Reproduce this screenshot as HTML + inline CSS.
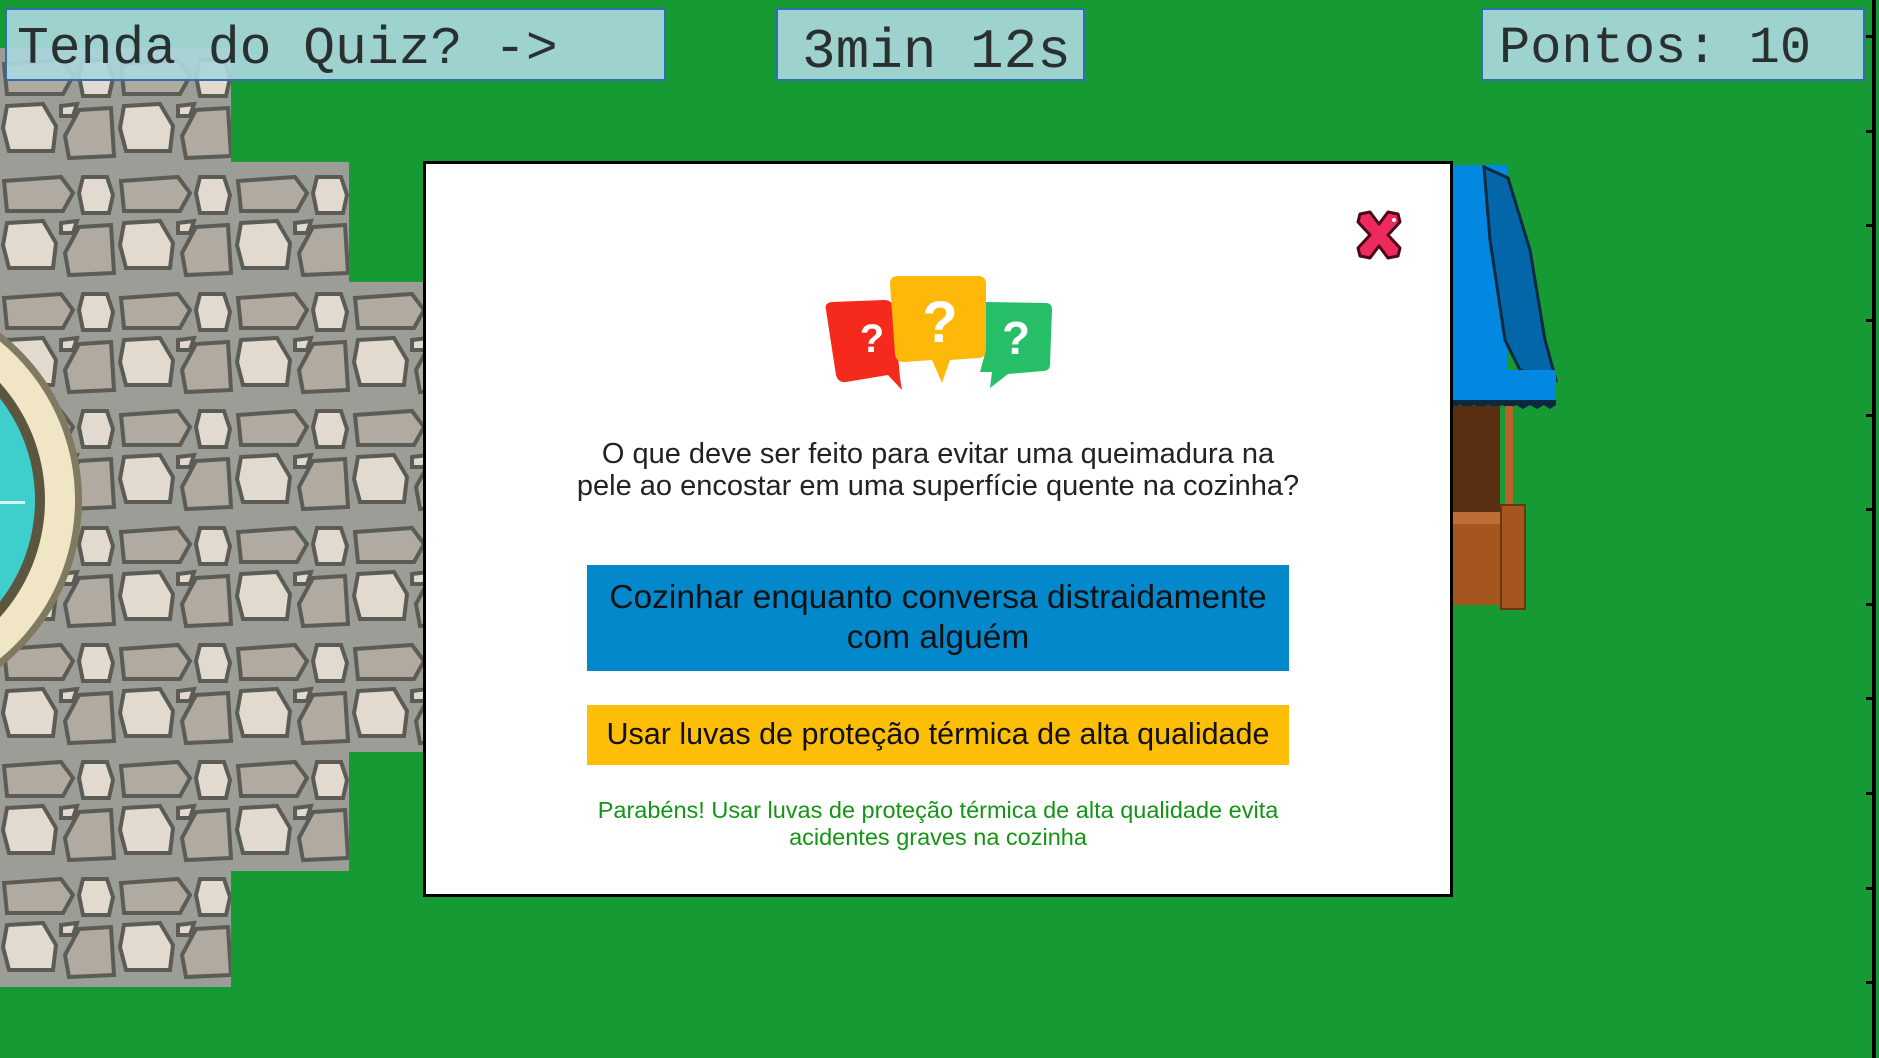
<!DOCTYPE html>
<html><head><meta charset="utf-8">
<style>
html,body{margin:0;padding:0;width:1879px;height:1058px;overflow:hidden;background:#169a34;font-family:"Liberation Sans",Arial,sans-serif}
.abs{position:absolute}
.hud{position:absolute;background:rgba(170,215,220,0.92);border:2px solid #2f6fb0;box-sizing:border-box;font-family:"Liberation Mono",monospace;color:#2a3030;white-space:nowrap;line-height:78px;font-weight:normal}
.c{position:absolute;left:0;width:100%;text-align:center;white-space:nowrap}
</style></head><body>
<svg class="abs" style="left:0;top:0" width="1879" height="1058">
<defs>
<pattern id="st" x="1" y="56" width="117" height="117" patternUnits="userSpaceOnUse">
<rect width="117" height="117" fill="#9d9d97"/>
<g stroke="#5c5c56" stroke-width="4">
<path d="M3 8 L60 4 L72 20 L62 38 L6 38 Z" fill="#b0aaa0"/>
<path d="M82 4 L106 4 L112 22 L108 40 L82 40 L78 20 Z" fill="#e2dacf"/>
<path d="M6 50 L42 48 L55 70 L52 95 L8 95 L2 72 Z" fill="#e2dacf"/>
<path d="M60 50 L76 48 L72 60 L60 60 Z" fill="#e2dacf"/>
<path d="M78 54 L110 52 L113 100 L68 102 L64 80 Z" fill="#b0aaa0"/>
</g>
</pattern>
</defs>
<path d="M0 48 H231 V162 H349 V282 H423 V752 H349 V871 H231 V987 H0 Z" fill="url(#st)"/>
<circle cx="-130" cy="500" r="212" fill="#807a60"/>
<circle cx="-130" cy="500" r="205" fill="#f0e6c6"/>
<circle cx="-130" cy="500" r="175" fill="#5c5640"/>
<circle cx="-130" cy="500" r="165" fill="#3ecfcc"/>
<rect x="0" y="501" width="25" height="3" fill="#d8f4f4"/>
<!-- tent -->
<rect x="1452" y="165" width="55" height="240" fill="#0288e0"/>
<path d="M1484 167 L1508 178 L1530 250 L1545 340 L1556 380 L1520 370 L1505 340 L1490 240 Z" fill="#0366a8" stroke="#0b2a40" stroke-width="3"/>
<rect x="1452" y="370" width="104" height="30" fill="#0288e0"/>
<path d="M1452 400 h104 v5 l-6 4 -6 -4 -7 4 -7 -4 -7 4 -7 -4 -7 4 -7 -4 -7 4 -7 -4 -7 4 -7 -4 -7 4 -7 -4 -7 4 -7 -4 z" fill="#0b2a40"/>
<rect x="1452" y="406" width="48" height="110" fill="#5a2e10"/>
<rect x="1505" y="406" width="8" height="105" fill="#b8622c"/>
<rect x="1452" y="512" width="55" height="93" fill="#a4561e"/>
<rect x="1452" y="512" width="55" height="12" fill="#c06c36"/>
<rect x="1501" y="505" width="24" height="104" fill="#a4561e" stroke="#6a3610" stroke-width="2"/>
<!-- right line -->
<rect x="1872" y="0" width="4" height="1058" fill="#000"/>
<g fill="#000"><rect x="1866" y="35" width="8" height="3"/><rect x="1866" y="130" width="8" height="3"/><rect x="1866" y="224" width="8" height="3"/><rect x="1866" y="319" width="8" height="3"/><rect x="1866" y="414" width="8" height="3"/><rect x="1866" y="508" width="8" height="3"/><rect x="1866" y="603" width="8" height="3"/><rect x="1866" y="697" width="8" height="3"/><rect x="1866" y="792" width="8" height="3"/><rect x="1866" y="887" width="8" height="3"/><rect x="1866" y="981" width="8" height="3"/></g>
</svg>

<div class="hud" style="left:5px;top:8px;width:661px;height:73px;font-size:53px;padding-left:10px">Tenda do Quiz? -&gt;</div>
<div class="hud" style="left:776px;top:8px;width:309px;height:73px;font-size:56px;padding-left:24px;line-height:84px">3min 12s</div>
<div class="hud" style="left:1481px;top:8px;width:384px;height:73px;font-size:52px;padding-left:16px">Pontos: 10</div>

<div class="abs" style="left:423px;top:161px;width:1030px;height:736px;background:#fff;border:3px solid #000;box-sizing:border-box">
</div>
<!-- close X -->
<svg class="abs" style="left:1352px;top:208px" width="54" height="54" viewBox="0 0 54 54">
<path d="M8 6 L18 4 L27 16 L36 4 L46 6 L48 14 L36 27 L48 40 L46 48 L36 50 L27 38 L18 50 L8 48 L6 40 L18 27 L6 14 Z" fill="#ee2a5c" stroke="#4a0a1a" stroke-width="3" stroke-linejoin="round"/>
<circle cx="42" cy="12" r="2" fill="#fff"/>
</svg>
<!-- quiz icon -->
<svg class="abs" style="left:820px;top:270px" width="240" height="125" viewBox="0 0 240 125">
<path d="M6 40 Q4 33 12 32 L64 30 Q72 30 74 38 L80 108 L82 120 L68 105 L26 112 Q18 113 16 105 Z" fill="#f52a1c"/>
<path d="M70 14 Q70 6 78 6 L158 6 Q166 6 166 14 L166 80 Q166 88 158 88 L130 90 L122 113 L112 90 L84 92 Q76 92 75 84 Z" fill="#fdb80a"/>
<path d="M166 32 L226 33 Q232 33 232 40 L230 94 Q230 101 223 101 L188 104 L170 118 L172 102 L160 102 L166 80 Z" fill="#26bf68"/>
<text x="52" y="82" font-size="40" font-weight="bold" fill="#fff" text-anchor="middle" font-family="Liberation Sans">?</text>
<text x="120" y="72" font-size="58" font-weight="bold" fill="#fff" text-anchor="middle" font-family="Liberation Sans">?</text>
<text x="196" y="84" font-size="46" font-weight="bold" fill="#fff" text-anchor="middle" font-family="Liberation Sans">?</text>
</svg>

<div class="abs" style="left:423px;top:0;width:1030px;height:1058px">
<div class="c" style="top:438px;font-size:29px;line-height:32px;color:#222">O que deve ser feito para evitar uma queimadura na<br>pele ao encostar em uma superfície quente na cozinha?</div>
</div>
<div class="abs" style="left:587px;top:565px;width:702px;height:106px;background:#0288cb">
<div class="c" style="top:13px;font-size:33.5px;line-height:40px;color:#111">Cozinhar enquanto conversa distraidamente<br>com alguém</div>
</div>
<div class="abs" style="left:587px;top:705px;width:702px;height:60px;background:#fdbe08">
<div class="c" style="top:11px;font-size:30.5px;line-height:36px;color:#111">Usar luvas de proteção térmica de alta qualidade</div>
</div>
<div class="abs" style="left:423px;top:0;width:1030px">
<div class="c" style="top:797px;font-size:23.5px;line-height:27px;color:#149414">Parabéns! Usar luvas de proteção térmica de alta qualidade evita<br>acidentes graves na cozinha</div>
</div>
</body></html>
